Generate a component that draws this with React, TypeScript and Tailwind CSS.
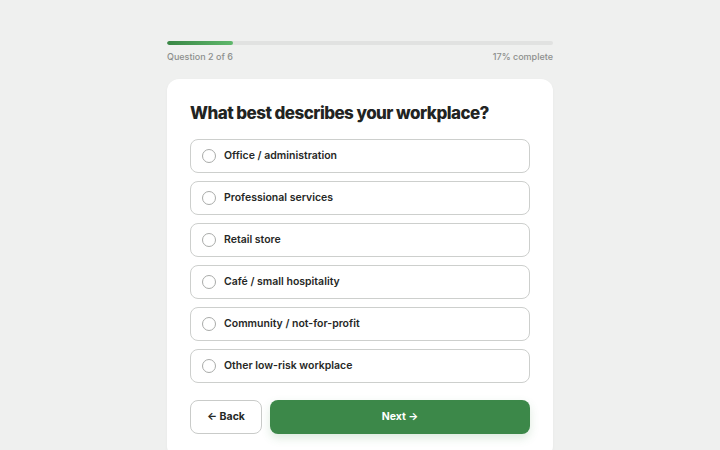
import React from "react";

const options = [
  "Office / administration",
  "Professional services",
  "Retail store",
  "Café / small hospitality",
  "Community / not-for-profit",
  "Other low-risk workplace",
];

export default function App() {
  const progress = 17;
  return (
    <div
      className="min-h-[450px] w-full bg-[#eff0ef] flex justify-center"
      style={{ fontFamily: "Inter, 'Noto Sans', sans-serif" }}
    >
      <div className="w-[386px] pt-[41px]">
        {/* progress */}
        <div className="h-[4px] w-full rounded-full bg-[#e1e2e1] overflow-hidden">
          <div
            className="h-full rounded-full bg-gradient-to-r from-[#3a8746] to-[#5fb86c]"
            style={{ width: `${progress}%` }}
          />
        </div>
        <div className="mt-[5px] flex justify-between text-[9px] font-medium text-[#8d8f8d]">
          <span>Question 2 of 6</span>
          <span>{progress}% complete</span>
        </div>

        {/* card */}
        <div className="mt-[15px] rounded-[12px] bg-white px-[23px] pt-[22px] pb-[24px] shadow-[0_1px_3px_rgba(0,0,0,0.04)]">
          <h1 className="text-[17px] leading-[24px] font-extrabold tracking-[-0.55px] text-[#222422]">
            What best describes your workplace?
          </h1>
          <div className="mt-[14px] flex flex-col gap-[8px]">
            {options.map((o) => (
              <div
                key={o}
                className="h-[34px] flex items-center rounded-[8px] border border-[#cdcfcd] px-[11px]"
              >
                <span className="h-[14px] w-[14px] rounded-full border-[1.5px] border-[#a9aba9]" />
                <span className="ml-[8px] text-[10.5px] font-semibold text-[#262826]">{o}</span>
              </div>
            ))}
          </div>
          <div className="mt-[17px] flex gap-[8px]">
            <button className="h-[34px] w-[72px] rounded-[8px] border border-[#c9cbc9] bg-white text-[10.5px] font-bold text-[#262826]">
              ← Back
            </button>
            <button className="h-[34px] flex-1 rounded-[8px] bg-[#3c8849] text-[10.5px] font-bold text-white shadow-[0_4px_10px_rgba(60,136,73,0.18)]">
              Next →
            </button>
          </div>
        </div>
      </div>
    </div>
  );
}
